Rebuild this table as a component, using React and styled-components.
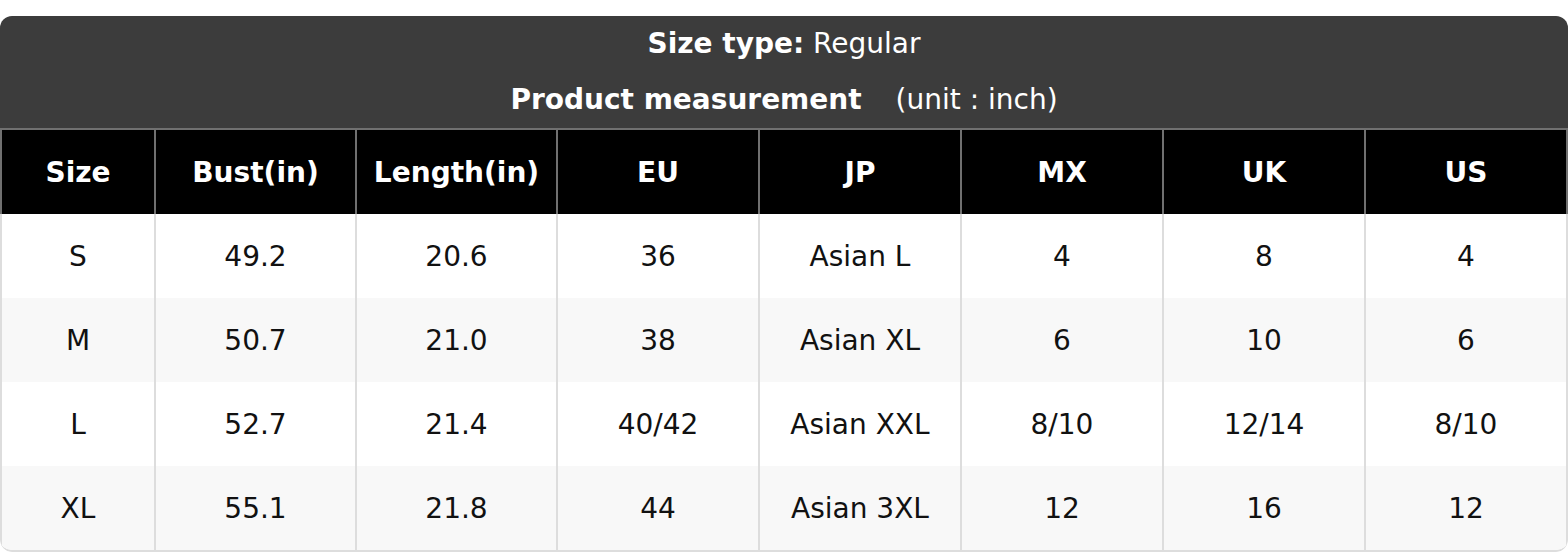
import React from 'react'
import styled, { createGlobalStyle } from 'styled-components'

const GlobalStyle = createGlobalStyle`
  * {
    box-sizing: border-box;
  }

  body {
    margin: 0;
    background: #fff;
    font-family: 'DejaVu Sans', 'Liberation Sans', sans-serif;
  }
`

const columns = ['Size', 'Bust(in)', 'Length(in)', 'EU', 'JP', 'MX', 'UK', 'US']

const rows = [
  ['S', '49.2', '20.6', '36', 'Asian L', '4', '8', '4'],
  ['M', '50.7', '21.0', '38', 'Asian XL', '6', '10', '6'],
  ['L', '52.7', '21.4', '40/42', 'Asian XXL', '8/10', '12/14', '8/10'],
  ['XL', '55.1', '21.8', '44', 'Asian 3XL', '12', '16', '12']
]

function SizeChart () {
  return (
    <ChartStyled>
      <Caption>
        <CaptionLine>
          <b>Size type:</b> Regular
        </CaptionLine>
        <CaptionLine>
          <b>Product measurement</b>
          <Unit>(unit : inch)</Unit>
        </CaptionLine>
      </Caption>
      <Grid>
        {columns.map((col, i) => (
          <HeadCell key={col} $last={i === columns.length - 1}>{col}</HeadCell>
        ))}
        {rows.map((row, r) =>
          row.map((value, i) => (
            <Cell
              key={r + '-' + i}
              $striped={r % 2 === 1}
              $last={i === row.length - 1}
            >
              {value}
            </Cell>
          ))
        )}
      </Grid>
    </ChartStyled>
  )
}

export default function App () {
  return (
    <>
      <GlobalStyle />
      <Page>
        <SizeChart />
      </Page>
    </>
  )
}

const Page = styled.main`
  padding-top: 16px;
`

const ChartStyled = styled.section`
  width: 1568px;
  border-radius: 12px;
  overflow: hidden;
`

const Caption = styled.div`
  background: #3c3c3c;
  color: #fff;
  text-align: center;
  font-size: 28px;
  border-bottom: 2px solid #707070;
`

const CaptionLine = styled.div`
  line-height: 56px;
  height: 56px;

  b {
    font-weight: bold;
  }
`

const Unit = styled.span`
  margin-left: 34px;
`

const Grid = styled.div`
  display: grid;
  grid-template-columns: 154px 201px 201px 202px 202px 202px 202px 204px;
  grid-auto-rows: 84px;
  border-bottom: 2px solid #ddd;
  border-radius: 0 0 12px 12px;
  overflow: hidden;
`

const HeadCell = styled.div`
  display: flex;
  align-items: center;
  justify-content: center;
  background: #000;
  color: #fff;
  font-size: 28px;
  font-weight: bold;
  border-left: 2px solid #707070;
  border-right: ${p => (p.$last ? '2px solid #707070' : 'none')};
`

const Cell = styled.div`
  display: flex;
  align-items: center;
  justify-content: center;
  background: ${p => (p.$striped ? '#f8f8f8' : '#fff')};
  color: #111;
  font-size: 28px;
  border-left: 2px solid #ddd;
  border-right: ${p => (p.$last ? '2px solid #ddd' : 'none')};
`
